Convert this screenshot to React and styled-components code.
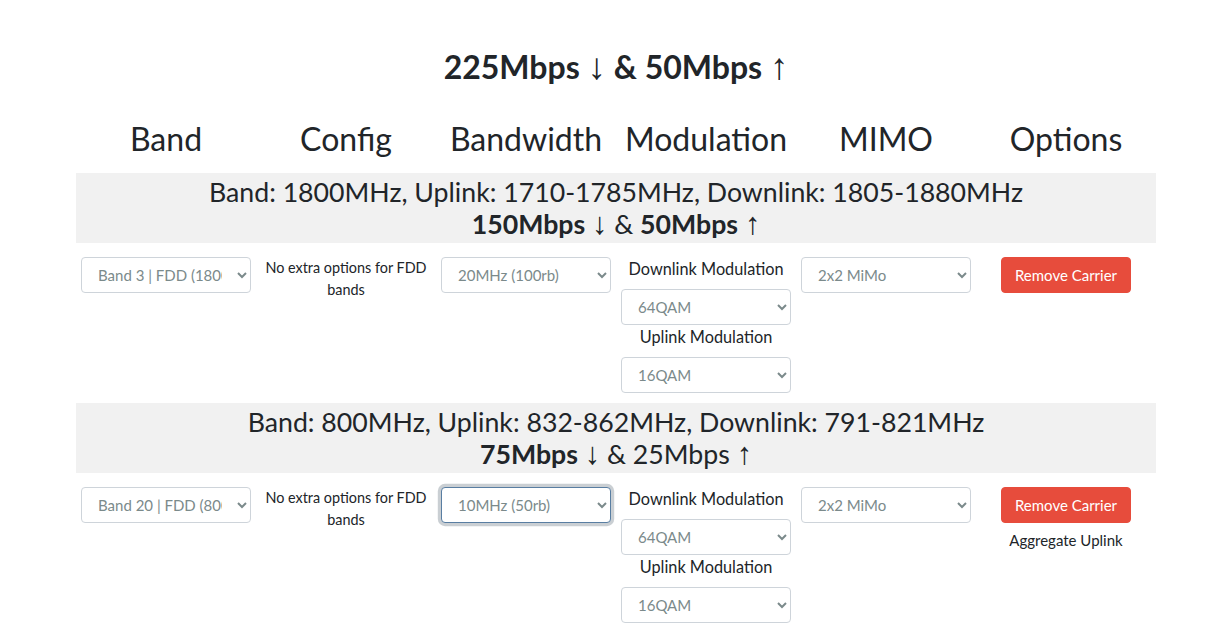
import React from "react";
import styled, { createGlobalStyle } from "styled-components";

const GlobalStyle = createGlobalStyle`
  body {
    margin: 0;
    background: #ffffff;
    color: #212529;
    font-family: Lato, "Open Sans", sans-serif;
    font-size: 15px;
    line-height: 1.5;
  }
`;

const Page = styled.div`
  padding: 48px 0 0 20px;
`;

const Container = styled.div`
  width: 1080px;
  margin: 0 auto;
`;

const Title = styled.h2`
  margin: 0 0 34px;
  font-size: 32px;
  font-weight: 700;
  line-height: 38px;
  text-align: center;
`;

const Grid = styled.div`
  display: grid;
  grid-template-columns: repeat(6, 1fr);
`;

const HeaderCell = styled.h2`
  margin: 0;
  font-size: 32px;
  font-weight: 400;
  line-height: 38px;
  text-align: center;
`;

const HeaderRow = styled(Grid)`
  margin-bottom: 15px;
`;

const BandInfo = styled.div`
  background: #f1f1f1;
  padding: 3px 0;
  text-align: center;
  font-size: 26.7px;
  line-height: 32px;
`;

const Bold = styled.span`
  font-weight: ${(p) => (p.$bold ? 700 : 400)};
`;

const Arrow = styled.span`
  font-family: "Liberation Sans", sans-serif;
  font-weight: 400;
  font-size: 1.15em;
  line-height: 1;
`;

const CarrierRow = styled(Grid)`
  padding: 14px 0 10px;
`;

const Cell = styled.div`
  padding: 0 5px;
  display: flex;
  flex-direction: column;
  align-items: center;
  text-align: center;
`;

const Select = styled.select`
  display: block;
  width: 100%;
  height: 36px;
  padding: 6px 12px;
  font-family: Lato, sans-serif;
  font-size: 15px;
  color: #7b8a8b;
  background: #ffffff;
  border: 1px solid ${(p) => (p.$focused ? "#597ea2" : "#ced4da")};
  border-radius: 4px;
  box-shadow: ${(p) => (p.$focused ? "0 0 0 3.2px rgba(44, 62, 80, 0.25)" : "none")};
  outline: none;
`;

const Note = styled.div`
  font-size: 14.4px;
  line-height: 22px;
  white-space: nowrap;
`;

const Label = styled.label`
  display: inline-block;
  font-size: 16.3px;
  line-height: 24px;
  margin-bottom: 8px;
`;

const DangerButton = styled.button`
  font-family: Lato, sans-serif;
  font-size: 15px;
  line-height: 1.5;
  padding: 5.5px 13px;
  color: #ffffff;
  background: #e74c3c;
  border: 1px solid #e74c3c;
  border-radius: 4px;
  cursor: pointer;
`;

const SmallText = styled.div`
  margin-top: 6px;
  font-size: 15px;
  line-height: 22.5px;
`;

const headers = ["Band", "Config", "Bandwidth", "Modulation", "MIMO", "Options"];

const carriers = [
  {
    info: "Band: 1800MHz, Uplink: 1710-1785MHz, Downlink: 1805-1880MHz",
    speed: [
      ["150Mbps", true],
      [" ", false],
      ["\u2193", false, true],
      [" & ", false],
      ["50Mbps", true],
      [" ", false],
      ["\u2191", false, true],
    ],
    band: "Band 3 | FDD (1800MHz)",
    bandwidth: "20MHz (100rb)",
    aggregate: false,
  },
  {
    info: "Band: 800MHz, Uplink: 832-862MHz, Downlink: 791-821MHz",
    speed: [
      ["75Mbps", true],
      [" ", false],
      ["\u2193", false, true],
      [" & 25Mbps ", false],
      ["\u2191", false, true],
    ],
    band: "Band 20 | FDD (800MHz)",
    bandwidth: "10MHz (50rb)",
    focusBandwidth: true,
    aggregate: true,
  },
];

function Carrier({ c }) {
  return (
    <>
      <BandInfo>
        <div>{c.info}</div>
        <div>
          {c.speed.map(([t, b, arrow], i) =>
            arrow ? (
              <Arrow key={i}>{t}</Arrow>
            ) : (
              <Bold key={i} $bold={b}>
                {t}
              </Bold>
            )
          )}
        </div>
      </BandInfo>
      <CarrierRow>
        <Cell>
          <Select defaultValue={c.band}>
            <option>{c.band}</option>
          </Select>
        </Cell>
        <Cell>
          <Note>
            No extra options for FDD
            <br />
            bands
          </Note>
        </Cell>
        <Cell>
          <Select defaultValue={c.bandwidth} $focused={c.focusBandwidth}>
            <option>{c.bandwidth}</option>
          </Select>
        </Cell>
        <Cell>
          <Label>Downlink Modulation</Label>
          <Select defaultValue="64QAM">
            <option>64QAM</option>
          </Select>
          <Label>Uplink Modulation</Label>
          <Select defaultValue="16QAM">
            <option>16QAM</option>
          </Select>
        </Cell>
        <Cell>
          <Select defaultValue="2x2 MiMo">
            <option>2x2 MiMo</option>
          </Select>
        </Cell>
        <Cell>
          <DangerButton type="button">Remove Carrier</DangerButton>
          {c.aggregate && <SmallText>Aggregate Uplink</SmallText>}
        </Cell>
      </CarrierRow>
    </>
  );
}

export default function App() {
  return (
    <Page>
      <GlobalStyle />
      <Container>
        <Title>
          225Mbps <Arrow>&darr;</Arrow> &amp; 50Mbps <Arrow>&uarr;</Arrow>
        </Title>
        <HeaderRow>
          {headers.map((h) => (
            <HeaderCell key={h}>{h}</HeaderCell>
          ))}
        </HeaderRow>
        {carriers.map((c, i) => (
          <Carrier key={i} c={c} />
        ))}
      </Container>
    </Page>
  );
}
